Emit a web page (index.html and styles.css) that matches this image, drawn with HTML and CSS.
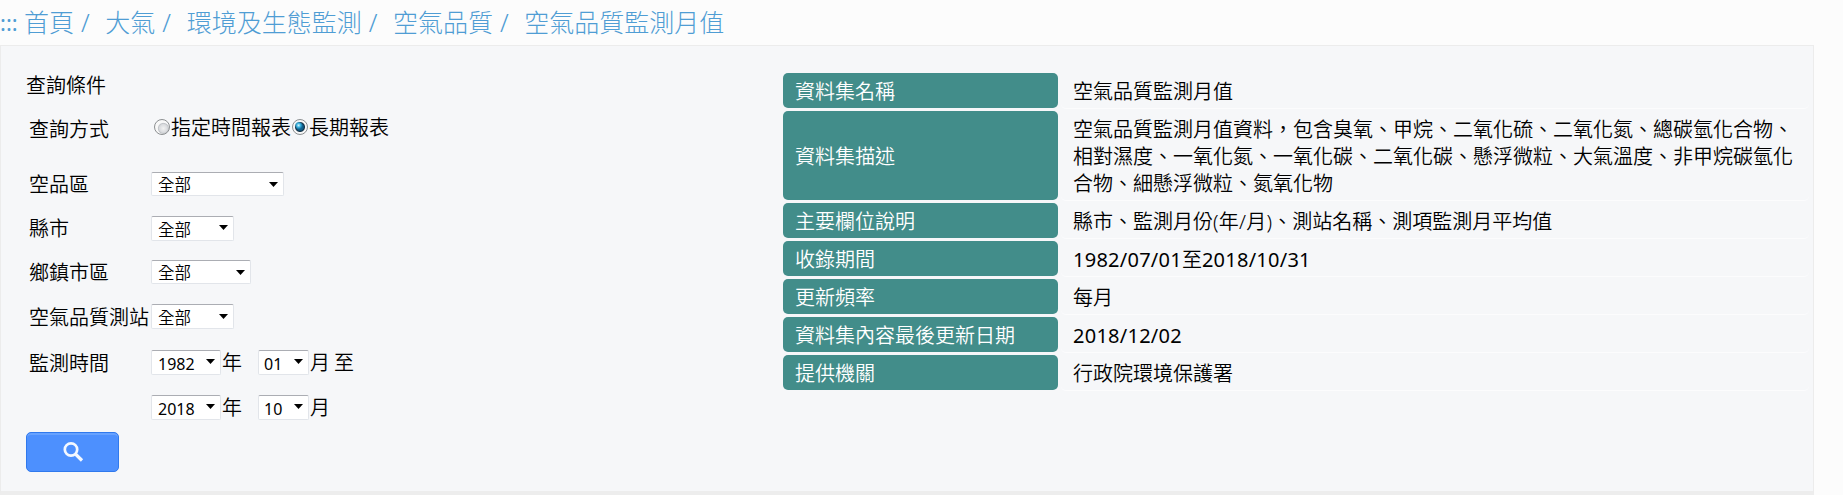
FILE: index.html
```html
<!DOCTYPE html>
<html lang="zh-Hant">
<head>
<meta charset="utf-8">
<title>空氣品質監測月值</title>
<link rel="stylesheet" href="styles.css">
</head>
<body>
<svg width="0" height="0" class="defs"><symbol id="arrow" viewBox="0 0 9 5"><path d="M0 0H9L4.5 5Z"/></symbol></svg>
<nav class="crumbs"><span class="dots">:::</span><a>首頁</a><i>/</i><a>大氣</a><i>/</i><a>環境及生態監測</a><i>/</i><a>空氣品質</a><i>/</i><a>空氣品質監測月值</a></nav>
<main class="panel">
  <form class="query">
    <div class="title">查詢條件</div>
    <div class="row method"><label class="name">查詢方式</label><span class="radio"></span><span class="opt">指定時間報表</span><span class="radio on"></span><span class="opt">長期報表</span></div>
    <div class="row"><label class="name">空品區</label><span class="select wide low"><span>全部</span><svg><use href="#arrow"/></svg></span></div>
    <div class="row"><label class="name">縣市</label><span class="select mid"><span>全部</span><svg><use href="#arrow"/></svg></span></div>
    <div class="row"><label class="name">鄉鎮市區</label><span class="select town low"><span>全部</span><svg><use href="#arrow"/></svg></span></div>
    <div class="row station"><label class="name">空氣品質測站</label><span class="select mid"><span>全部</span><svg><use href="#arrow"/></svg></span></div>
    <div class="row from"><label class="name">監測時間</label><span class="select year"><span>1982</span><svg><use href="#arrow"/></svg></span><span class="unit y">年</span><span class="select month"><span>01</span><svg><use href="#arrow"/></svg></span><span class="unit">月</span><span class="unit to">至</span></div>
    <div class="row until"><span class="name"></span><span class="select year"><span>2018</span><svg><use href="#arrow"/></svg></span><span class="unit y">年</span><span class="select month"><span>10</span><svg><use href="#arrow"/></svg></span><span class="unit">月</span></div>
    <button class="search" type="button" aria-label="查詢"><svg width="22" height="22" viewBox="0 0 22 22"><circle cx="9" cy="8.5" r="6.2" fill="none" stroke="#f4f8ff" stroke-width="2.7"/><path d="M13.4 13L20 19.5" stroke="#f4f8ff" stroke-width="3.2"/></svg></button>
  </form>
  <dl class="info">
    <dt>資料集名稱</dt><dd>空氣品質監測月值</dd>
    <dt>資料集描述</dt><dd>空氣品質監測月值資料，包含臭氧、甲烷、二氧化硫、二氧化氮、總碳氫化合物、相對濕度、一氧化氮、一氧化碳、二氧化碳、懸浮微粒、大氣溫度、非甲烷碳氫化合物、細懸浮微粒、氮氧化物</dd>
    <dt>主要欄位說明</dt><dd>縣市、監測月份<span class="num">(年/月)</span>、測站名稱、測項監測月平均值</dd>
    <dt>收錄期間</dt><dd><span class="num">1982/07/01</span>至<span class="num">2018/10/31</span></dd>
    <dt>更新頻率</dt><dd>每月</dd>
    <dt>資料集內容最後更新日期</dt><dd><span class="num">2018/12/02</span></dd>
    <dt>提供機關</dt><dd>行政院環境保護署</dd>
  </dl>
</main>
</body>
</html>
```
FILE: styles.css
```css
* { box-sizing: border-box; }
body {
  margin: 0;
  height: 495px;
  overflow: hidden;
  background: #fcfcfc;
  color: #000;
  font: 350 20px/27px "Noto Sans", "Noto Sans CJK TC", sans-serif;
}
.defs { display: block; position: absolute; }
.crumbs {
  display: flex;
  height: 45px;
  align-items: center;
  color: #4f9dd4;
  font-size: 25px;
  font-weight: 300;
  line-height: 45px;
  white-space: nowrap;
}
.crumbs .dots { width: 24px; font-size: 22px; font-weight: 400; }
.crumbs i { width: 31.3px; padding-left: 7px; font-style: normal; }
.panel {
  display: flex;
  width: 1814px;
  height: 450px;
  padding: 24px 4px 0 25px;
  border: 1px solid #ececec;
  border-bottom: 4px solid #ededed;
  background: #f6f7f9;
}
.query { width: 757px; }
.title { height: 30px; line-height: 31px; }
.row { display: flex; align-items: center; height: 44px; padding-left: 3px; white-space: nowrap; }
.name { width: 122px; padding-top: 1px; }
.method { margin: 7px 0 11px; }
.station { height: 45px; }
.from { height: 47px; }
.until { height: 43px; }
.radio {
  width: 16px;
  height: 16px;
  margin: -4px 1px 0 3px;
  border: 1px solid #8c8f91;
  border-radius: 50%;
  background: radial-gradient(circle at 60% 60%, #f2f2f2 0, #d9dbde 4px, #c3c6ca 5px, #f8f8f8 6px);
}
.radio.on {
  margin-left: 1px;
  background: radial-gradient(circle at 40% 38%, #d8f8ff 0, #38b2df 2px, transparent 4px), radial-gradient(circle, #10618f 3px, #173347 4.5px, #f8f8f8 5.5px);
}
.opt { margin-top: -3px; }
.select {
  display: flex;
  align-items: center;
  justify-content: space-between;
  height: 25px;
  padding: 3px 6px 0;
  border: 1px solid #e2e5ea;
  border-top-color: #abadb3;
  border-radius: 2px;
  background: #fff;
  font-size: 16.5px;
  line-height: 22px;
}
.select svg { width: 9px; height: 5px; margin-top: -4px; }
.select.low { height: 24px; padding-top: 1px; }
.select.low svg { margin-top: -1px; }
.wide { width: 133px; padding-right: 5px; }
.mid { width: 83px; padding-right: 5px; }
.town { width: 100px; padding-right: 5px; }
.year { width: 70px; padding: 2px 5px 0 6px; font-size: 16px; font-weight: 400; }
.month { width: 51px; padding: 2px 5px 0; font-size: 16px; font-weight: 400; }
.unit { padding-left: 1px; }
.unit.y { width: 37px; }
.unit.to { padding-left: 4px; }
.search {
  display: flex;
  align-items: center;
  justify-content: center;
  width: 93px;
  height: 40px;
  margin-top: 3px;
  padding: 0;
  border: 1px solid #3079ed;
  border-radius: 5px;
  background: #4d90fe;
  box-shadow: inset 0 2px 0 #67a2ff;
}
.info {
  display: grid;
  grid-template-columns: 275px 748px;
  gap: 2px 3px;
  align-content: start;
  margin: 3px 0 0;
}
.info dt {
  display: flex;
  align-items: center;
  margin-bottom: 1px;
  padding: 5px 12px 3px;
  border-radius: 5px;
  background: #428d8a;
  color: #fff;
}
.info dd {
  margin: 0;
  padding: 5px 14px 3px 12px;
  border-bottom: 1px solid #fcfcfd;
  border-radius: 5px;
}
.num { font-weight: 400; letter-spacing: .25px; }
dd:nth-of-type(3) .num { font-weight: 350; }
```
